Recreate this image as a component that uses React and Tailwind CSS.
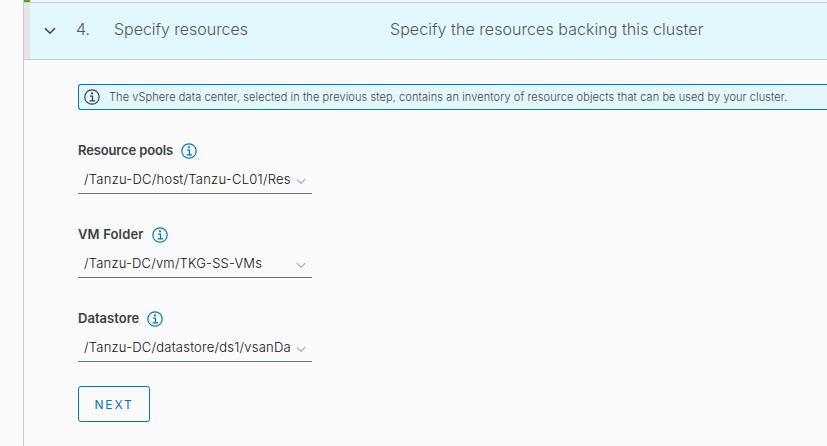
function Chevron({ className }) {
  return (
    <svg viewBox="0 0 12 8" className={className} fill="none" stroke="currentColor">
      <path d="M1 1.2 L6 6.2 L11 1.2" />
    </svg>
  );
}

function InfoIcon({ className }) {
  return (
    <svg viewBox="0 0 16 16" className={className} fill="none" stroke="currentColor">
      <circle cx="8" cy="8" r="7.2" strokeWidth="1.2" />
      <path d="M6 7.1 H8.5 V11.6 M5.6 11.9 H11" strokeWidth="1.3" />
      <circle cx="8" cy="4.3" r="1.15" fill="currentColor" stroke="none" />
    </svg>
  );
}

function Field({ label, value, labelTracking, tracking }) {
  return (
    <div className="flex h-[84px] w-[234px] flex-col">
      <div className="flex h-5 items-center gap-2">
        <span className={`mt-0.5 text-[13px] font-semibold text-[#3a3f44] ${labelTracking}`}>{label}</span>
        <InfoIcon className="mt-0.5 size-4 text-[#0079b8]" />
      </div>
      <div className="mt-[6px] flex h-7 items-center justify-between border-b border-[#6a7a81] pr-1.5 pl-1.5">
        <span className={`text-[13px] font-[350] whitespace-nowrap text-[#111] ${tracking}`}>{value}</span>
        <Chevron className="mt-1 h-[7px] w-[10px] shrink-0 stroke-[1.5] text-[#a9a9a9]" />
      </div>
    </div>
  );
}

export default function App() {
  return (
    <div className="h-[446px] w-[827px] overflow-hidden bg-[#fafafa] pl-[23px] font-['Inter','Open_Sans',sans-serif] text-[#565656]">
      <div className="h-full border-l border-[#c5d0d6]">
        <div className="h-0.5 bg-[#f3f6f8]">
          <div className="h-full w-1.5 bg-[#5aa220]" />
        </div>
        <header className="flex h-[58px] border-y border-[#c5d0d6] bg-[#e3f7ff]">
          <div className="w-1.5 bg-[#e6e6e6]" />
          <div className="flex flex-1 items-center pb-[5px] pl-3.5 text-base font-light whitespace-nowrap">
            <Chevron className="mt-1 h-2 w-3 stroke-[1.6] text-[#454545]" />
            <span className="ml-5 w-[38px]">4.</span>
            <span className="w-[276px] tracking-[-0.03px]">Specify resources</span>
            <span className="tracking-[0.06px]">Specify the resources backing this cluster</span>
          </div>
        </header>
        <main className="pt-6 pl-[54px]">
          <div className="flex h-[26px] items-center rounded-l-[3px] border border-r-0 border-[#0079b8] bg-[#e3f7ff] pl-[5px]">
            <InfoIcon className="size-4 text-[#314351]" />
            <span className="ml-[9px] text-[11px] font-light tracking-[0.095px] whitespace-nowrap text-[#454545]">
              The vSphere data center, selected in the previous step, contains an inventory of resource objects that can be used by your cluster.
            </span>
          </div>
          <div className="pt-[30px]">
            <Field label="Resource pools" value="/Tanzu-DC/host/Tanzu-CL01/Res" labelTracking="tracking-[-0.13px]" tracking="tracking-[0.25px]" />
            <Field label="VM Folder" value="/Tanzu-DC/vm/TKG-SS-VMs" labelTracking="tracking-[0.15px]" tracking="tracking-[0.19px]" />
            <Field label="Datastore" value="/Tanzu-DC/datastore/ds1/vsanDa" labelTracking="tracking-[0.02px]" tracking="tracking-[0.22px]" />
          </div>
          <button className="-mt-[6px] flex h-9 w-[72px] items-center justify-center rounded-[3px] border border-[#0079b8] pt-0.5 text-xs tracking-[1.8px] text-[#0079b8]">
            NEXT
          </button>
        </main>
      </div>
    </div>
  );
}
